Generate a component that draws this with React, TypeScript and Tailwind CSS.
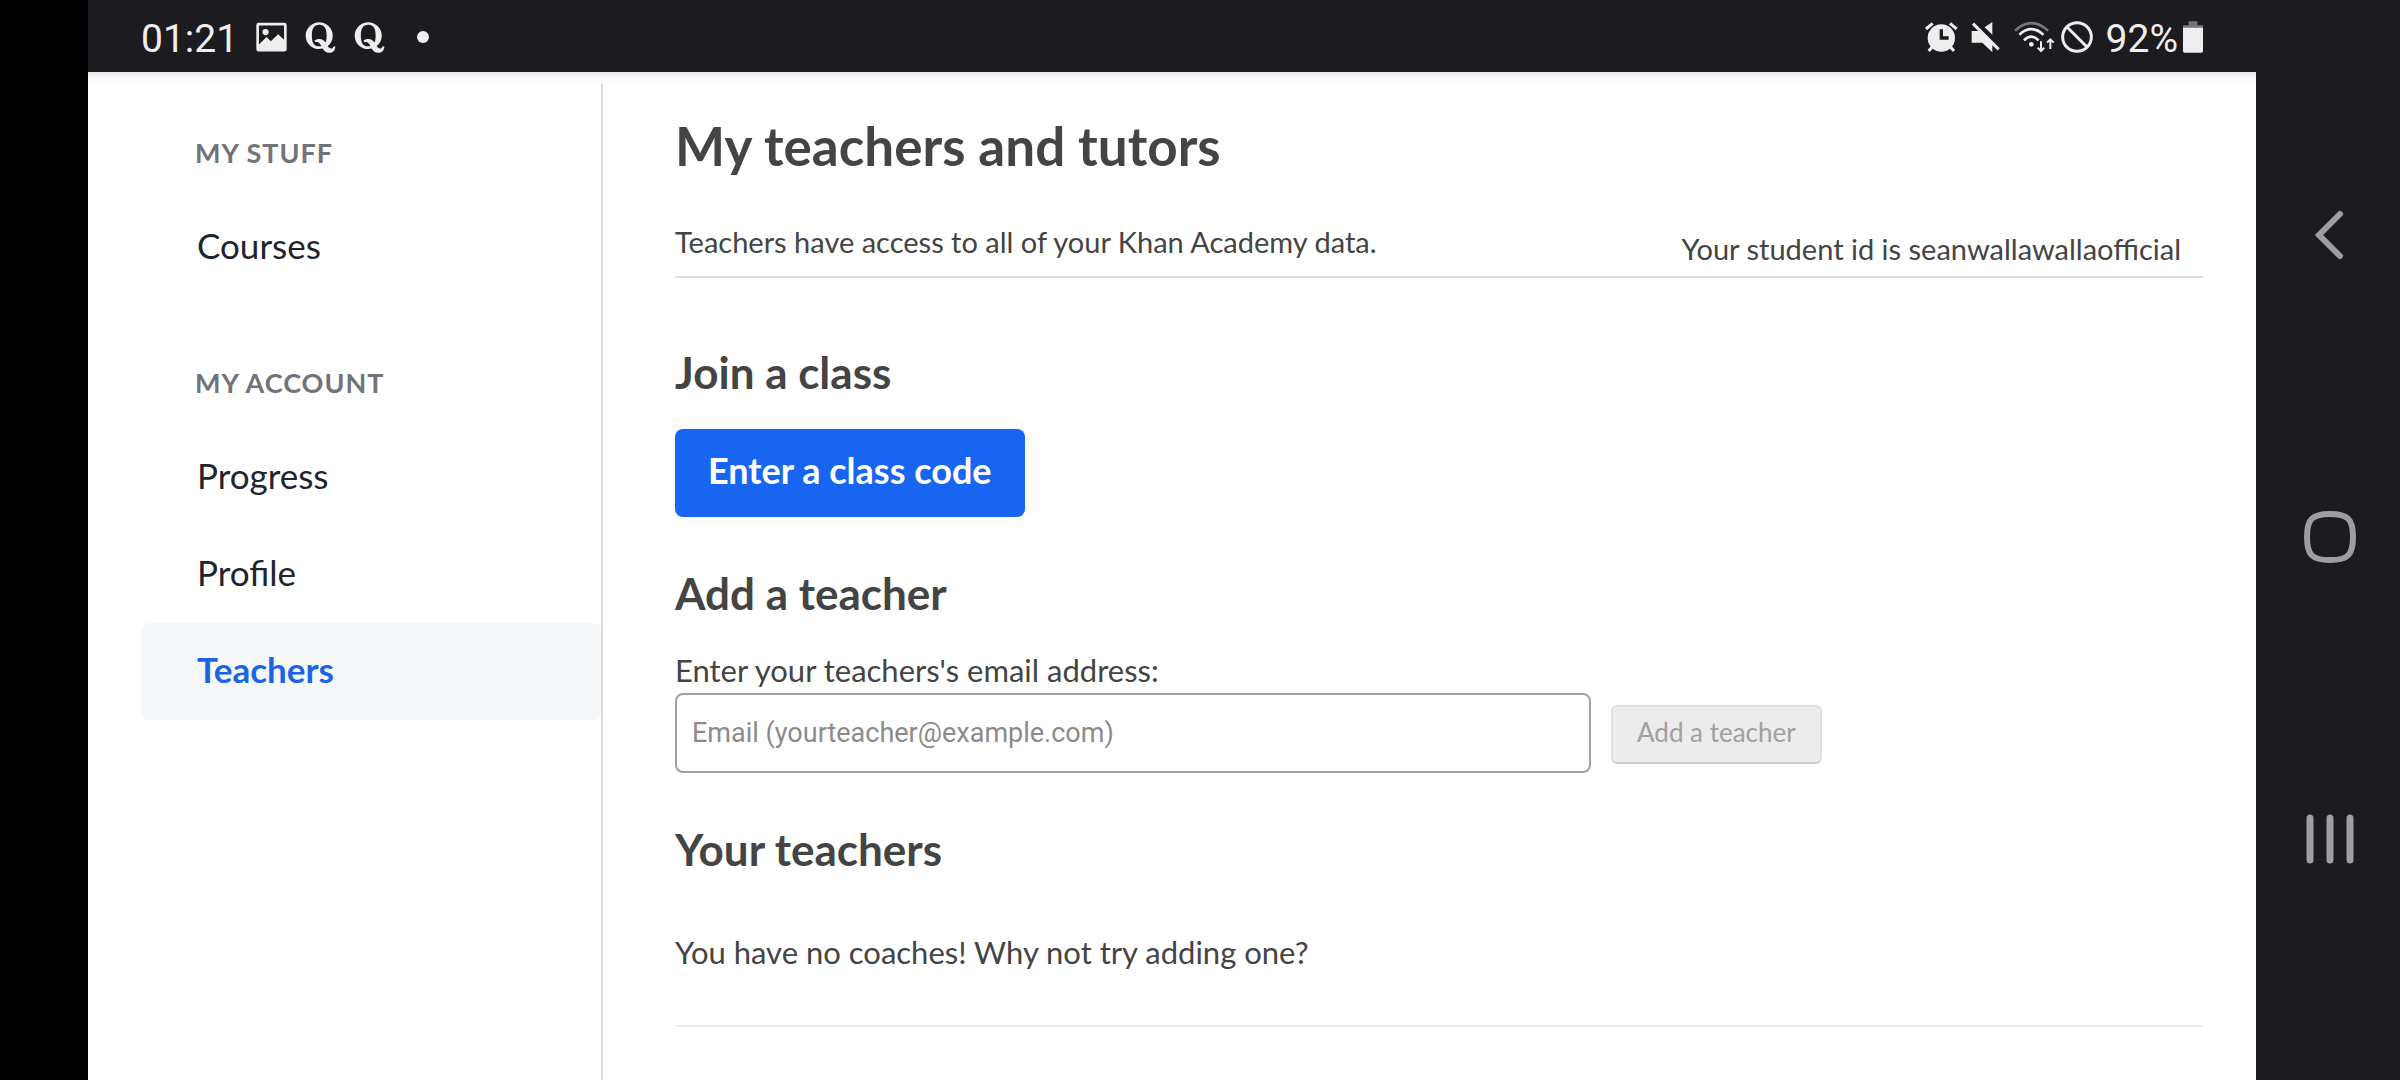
import type { ReactNode } from "react";
import { FaQuora } from "react-icons/fa";

function PictureIcon() {
  return (
    <svg className="h-[30px] w-[31px]" viewBox="530 67 94 90" fill="none" aria-hidden="true">
      <rect x="535" y="73" width="84" height="79" rx="3" stroke="#eeeeee" strokeWidth="8" />
      <circle cx="559" cy="97" r="9.5" fill="#eeeeee" />
      <path d="M539 135 562 112 575 125 597 104 617 122V153H539Z" fill="#eeeeee" />
    </svg>
  );
}

function AlarmIcon() {
  return (
    <svg className="h-8 w-[33px]" viewBox="134 63 99 96" fill="none" aria-hidden="true">
      <circle cx="183" cy="114" r="41" fill="#eeeeee" />
      <path d="M137 87 157 70M209 70 229 87" stroke="#eeeeee" strokeWidth="9" />
      <path d="M155 142 145 153M211 142 221 153" stroke="#eeeeee" strokeWidth="9" />
      <path d="M183 88V114H205" stroke="#1c1b20" strokeWidth="10" />
    </svg>
  );
}

function MutedIcon() {
  return (
    <svg className="h-8 w-[30px]" viewBox="277 63 90 96" fill="#eeeeee" aria-hidden="true">
      <path d="M279 93H306L341 128V157L311 128H279Z" />
      <path d="M341 66V104L318 82Z" />
      <path d="M283 71 360 148" stroke="#eeeeee" strokeWidth="9" />
    </svg>
  );
}

function WifiIcon() {
  return (
    <svg className="h-8 w-[41px]" viewBox="401 63 123 96" fill="none" strokeWidth="8" aria-hidden="true">
      <path d="M404 92Q453 47 503 92" stroke="#77767a" />
      <path d="M417 104Q453 71 489 104" stroke="#eeeeee" />
      <path d="M431 121Q453 99 475 121" stroke="#eeeeee" />
      <circle cx="453" cy="133" r="7" fill="#eeeeee" />
      <path d="M482 124V152M472 143 482 153 492 143" stroke="#eeeeee" strokeWidth="6" />
      <path d="M510 147V119M500 128 510 118 520 128" stroke="#eeeeee" strokeWidth="6" />
    </svg>
  );
}

function BlockedIcon() {
  return (
    <svg className="h-8 w-8" viewBox="542 63 96 96" fill="none" stroke="#eeeeee" strokeWidth="9" aria-hidden="true">
      <circle cx="590" cy="111" r="43" />
      <path d="M560 81 620 141" />
    </svg>
  );
}

function BatteryIcon() {
  return (
    <svg className="h-8 w-5" viewBox="909 63 60 96" aria-hidden="true">
      <path d="M926 64H952V76H969V90H909V76H926Z" fill="#77767a" />
      <path d="M909 83H969V153Q969 158 964 158H914Q909 158 909 153Z" fill="#eeeeee" />
    </svg>
  );
}

function StatusBar() {
  return (
    <header className="flex h-[72px] shrink-0 items-center justify-between bg-[#1c1b20] px-[53px] pt-0.5 font-['Roboto',sans-serif] text-[39px] leading-10 text-[#eeeeee]">
      <div className="flex items-center">
        <span className="pt-1">01:21</span>
        <div className="ml-[18px] flex items-center gap-4">
          <PictureIcon />
          <div className="flex items-center gap-[14px]">
            <FaQuora className="text-[35px]" />
            <FaQuora className="text-[35px]" />
          </div>
        </div>
        <span className="ml-[30px] size-3 rounded-full bg-[#eeeeee]" />
      </div>
      <div className="flex items-center">
        <div className="flex items-center gap-[13px]">
          <AlarmIcon />
          <MutedIcon />
          <WifiIcon />
        </div>
        <div className="ml-1.5 flex items-center gap-[13px]">
          <BlockedIcon />
          <span className="pt-1">92%</span>
        </div>
        <div className="ml-[5px]">
          <BatteryIcon />
        </div>
      </div>
    </header>
  );
}

function NavItem({ label, active = false }: { label: string; active?: boolean }) {
  return (
    <li>
      <a
        href="#"
        aria-current={active ? "page" : undefined}
        className={
          active
            ? "flex h-[97px] items-center rounded-lg bg-[#f6f8fa] pb-1 pl-14 text-[35px] font-bold text-[#1b64e6]"
            : "flex h-[97px] items-center rounded-lg pb-1 pl-14 text-[35px] text-[#21242c]"
        }
      >
        {label}
      </a>
    </li>
  );
}

function NavGroup({ title, children }: { title: string; children: ReactNode }) {
  return (
    <section>
      <h2 className="mb-[26px] pl-[54px] text-[27px] leading-10 font-bold tracking-[1px] text-[#717378] uppercase">
        {title}
      </h2>
      <ul>{children}</ul>
    </section>
  );
}

function SectionTitle({ children }: { children: ReactNode }) {
  return <h2 className="mb-[31px] text-[44px] leading-[52px] font-bold">{children}</h2>;
}

function SystemNav() {
  return (
    <nav
      aria-label="System"
      className="flex w-36 shrink-0 flex-col items-center justify-between bg-[#1c1b20] pt-[209px] pb-[215px] pl-1"
    >
      <button type="button" aria-label="Back">
        <svg className="size-[52px]" viewBox="0 0 52 52" fill="none" stroke="#9e9ea0" strokeWidth="6">
          <path d="M36 5 15 26 36 47" strokeLinecap="round" />
        </svg>
      </button>
      <button type="button" aria-label="Home">
        <svg className="size-[52px]" viewBox="0 0 52 52" fill="none" stroke="#9e9ea0" strokeWidth="6">
          <path d="M3 26C3 8 8 3 26 3S49 8 49 26 44 49 26 49 3 44 3 26Z" />
        </svg>
      </button>
      <button type="button" aria-label="Recent apps">
        <svg className="size-[52px]" viewBox="0 0 52 52" fill="none" stroke="#9e9ea0" strokeWidth="7">
          <path d="M6 5V47M26 5V47M46 5V47" strokeLinecap="round" />
        </svg>
      </button>
    </nav>
  );
}

export default function App() {
  return (
    <div className="flex min-h-screen bg-black pl-[88px] font-['Lato',sans-serif]">
      <div className="flex min-w-0 flex-1 flex-col bg-white">
        <StatusBar />
        <div className="h-3 shrink-0 bg-linear-to-b from-[#e6e6e6] via-[#f8f8f8] to-white" />
        <div className="flex flex-1">
          <nav
            aria-label="Account"
            className="flex w-[515px] shrink-0 flex-col gap-[67px] border-r-2 border-[#d9dadb] pt-[49px] pl-[53px]"
          >
            <NavGroup title="My stuff">
              <NavItem label="Courses" />
            </NavGroup>
            <NavGroup title="My account">
              <NavItem label="Progress" />
              <NavItem label="Profile" />
              <NavItem label="Teachers" active />
            </NavGroup>
          </nav>

          <main className="min-w-0 flex-1 pt-[30px] pr-[53px] pl-[72px] text-[#444444]">
            <h1 className="mb-[46px] text-[53px] leading-[64px] font-bold">My teachers and tutors</h1>
            <div className="flex justify-between border-b-2 border-[#dcdcdc] text-[29px] leading-9">
              <p className="pb-4">Teachers have access to all of your Khan Academy data.</p>
              <p className="pt-[7px] pr-[22px] pb-[9px]">Your student id is seanwallawallaofficial</p>
            </div>

            <section className="mt-[68px]">
              <SectionTitle>Join a class</SectionTitle>
              <button
                type="button"
                className="flex h-[88px] items-center rounded-lg bg-[#1865f2] px-[33px] pb-1.5 text-[36px] font-bold text-white"
              >
                Enter a class code
              </button>
            </section>

            <section className="mt-[50px]">
              <SectionTitle>Add a teacher</SectionTitle>
              <form onSubmit={(e) => e.preventDefault()}>
                <label htmlFor="teacher-email" className="mb-[3px] block text-[31px] leading-10">
                  Enter your teachers's email address:
                </label>
                <div className="flex items-center gap-5">
                  <input
                    id="teacher-email"
                    type="email"
                    placeholder="Email (yourteacher@example.com)"
                    className="h-20 w-[916px] min-w-0 rounded-lg border-2 border-[#a09fab] bg-white px-[15px] font-['Roboto',sans-serif] text-[27px] placeholder:text-[#8b8b8b]"
                  />
                  <button
                    type="submit"
                    disabled
                    className="mt-[3px] h-[59px] shrink-0 rounded-md border-2 border-[#e0e0e0] border-b-[#cfcfcf] bg-[#ececec] px-6 pb-1 text-[26px] text-[#a0a0a0]"
                  >
                    Add a teacher
                  </button>
                </div>
              </form>
            </section>

            <section className="mt-[50px]">
              <SectionTitle>Your teachers</SectionTitle>
              <p className="mt-[57px] border-b-2 border-[#eeeeee] pb-[53px] text-[31px] leading-10">
                You have no coaches! Why not try adding one?
              </p>
            </section>
          </main>
        </div>
      </div>
      <SystemNav />
    </div>
  );
}
